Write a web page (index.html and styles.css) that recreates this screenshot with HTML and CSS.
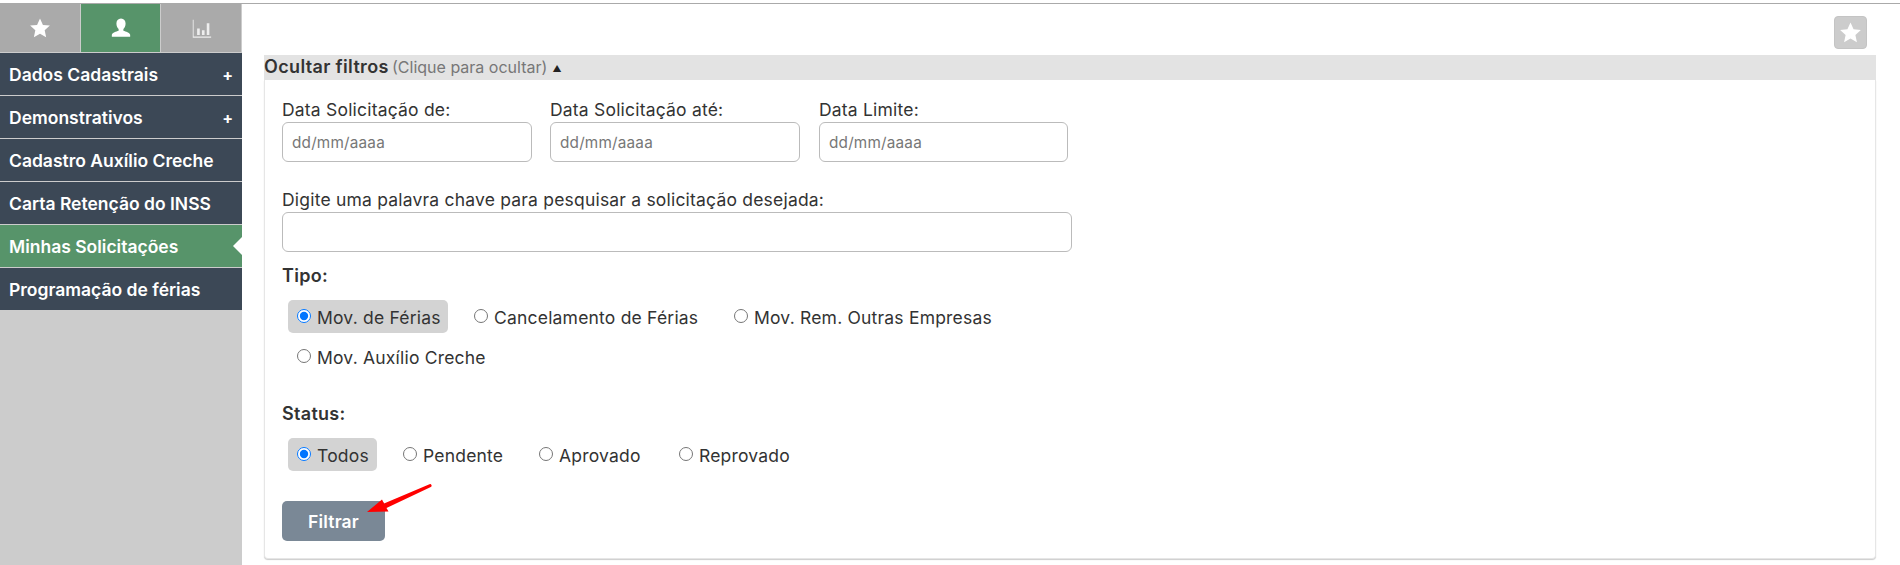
FILE: index.html
```html
<!DOCTYPE html>
<html lang="pt-BR">
<head>
<meta charset="utf-8">
<title>Minhas Solicitações</title>
<link rel="stylesheet" href="styles.css">
</head>
<body>
<div class="app">
  <aside class="sidebar">
    <div class="tabs">
      <div class="tab">
        <svg class="tab-icon" viewBox="0 0 24 24"><path class="fill-white" d="M12 1.500l3.200 7.100 7.600.8-5.700 5.100 1.600 7.600L12 18.200l-6.700 3.900 1.600-7.600-5.700-5.100 7.600-.8z"/></svg>
      </div>
      <div class="tab tab-active">
        <svg class="tab-icon" viewBox="0 0 24 24"><path class="fill-white" d="M12 1.500c3.200 0 5 2.300 5 5.600 0 2.500-1 4.900-2.400 6.100v1.900c2.700 1 6.800 2 7.400 4.200v2.200H2v-2.200c.6-2.200 4.700-3.200 7.400-4.200v-1.900C8 12 7 9.600 7 7.100c0-3.300 1.800-5.600 5-5.600z"/></svg>
      </div>
      <div class="tab">
        <svg class="tab-icon tab-icon-chart" viewBox="0 0 24 24"><path class="fill-white" d="M2 2h1v19h20v1.500H2zM7 12h3v7.500H7zM12.500 14h3v5.500h-3zM18 6h3v13.500h-3z"/></svg>
      </div>
    </div>
    <nav class="menu">
      <a class="menu-item">Dados Cadastrais<span class="plus">+</span></a>
      <a class="menu-item">Demonstrativos<span class="plus">+</span></a>
      <a class="menu-item">Cadastro Auxílio Creche</a>
      <a class="menu-item">Carta Retenção do INSS</a>
      <a class="menu-item menu-item-active">Minhas Solicitações</a>
      <a class="menu-item menu-item-last">Programação de férias</a>
    </nav>
  </aside>
  <main class="main">
    <div class="toolbar">
      <button class="fav" type="button" aria-label="Favoritar">
        <svg class="fav-icon" viewBox="0 0 24 24"><path class="fill-white" d="M12 1.500l3.200 7.100 7.600.8-5.700 5.100 1.600 7.600L12 18.200l-6.700 3.900 1.600-7.600-5.700-5.100 7.600-.8z"/></svg>
      </button>
    </div>
    <section class="panel">
      <header class="panel-head"><strong>Ocultar filtros</strong> <span class="hint">(Clique para ocultar)</span> <span class="caret">▲</span></header>
      <form class="card">
        <div class="dates">
          <label class="field field-a">Data Solicitação de:<input class="input" type="text" placeholder="dd/mm/aaaa"></label>
          <label class="field field-b">Data Solicitação até:<input class="input" type="text" placeholder="dd/mm/aaaa"></label>
          <label class="field field-c">Data Limite:<input class="input" type="text" placeholder="dd/mm/aaaa"></label>
        </div>
        <label class="field field-key">Digite uma palavra chave para pesquisar a solicitação desejada:<input class="input" type="text"></label>
        <h3 class="group-title title-tipo">Tipo:</h3>
        <div class="radios radios-tipo">
          <label class="radio radio-on r-ferias"><input type="radio" name="tipo" checked>Mov. de Férias</label>
          <label class="radio r-canc"><input type="radio" name="tipo">Cancelamento de Férias</label>
          <label class="radio r-rem"><input type="radio" name="tipo">Mov. Rem. Outras Empresas</label>
          <label class="radio r-aux"><input type="radio" name="tipo">Mov. Auxílio Creche</label>
        </div>
        <h3 class="group-title title-status">Status:</h3>
        <div class="radios">
          <label class="radio radio-on r-todos"><input type="radio" name="status" checked>Todos</label>
          <label class="radio r-pend"><input type="radio" name="status">Pendente</label>
          <label class="radio r-apr"><input type="radio" name="status">Aprovado</label>
          <label class="radio r-rep"><input type="radio" name="status">Reprovado</label>
        </div>
        <button class="submit" type="button">Filtrar</button>
      </form>
    </section>
    <svg class="arrow" viewBox="0 0 70 34"><path class="arrow-shape" d="M1 29L16 16.500 18 20.500 63.500 1.200a1.500 1.500 0 0 1 1.300 2.700L20.500 25l2 3.500z"/></svg>
  </main>
</div>
</body>
</html>
```
FILE: styles.css
```css
* { box-sizing: border-box; }
html, body { margin: 0; height: 100%; }
body {
  font-family: "Inter", "Noto Sans", sans-serif;
  font-size: 17.500px;
  letter-spacing: 0.2px;
  color: #333;
  background: #fff;
  overflow: hidden;
}
.app { display: flex; height: 565px; padding-top: 3px; position: relative; }
.app::before {
  content: "";
  position: absolute;
  left: 0; right: 0; top: 3px;
  height: 1px;
  background: #aaa;
}
.fill-white { fill: #fff; }
.sidebar { width: 242px; flex: none; background: #ccc; padding-top: 1px; }
.tabs { display: flex; height: 48px; width: 241px; gap: 1px; }
.tab { flex: 1; display: flex; align-items: center; justify-content: center; background: #aaa; }
.tab-active { background: #57946a; }
.tab-icon { width: 22px; height: 22px; }
.tab-icon-chart { width: 21px; height: 21px; opacity: 0.8; }
.menu { display: flex; flex-direction: column; padding-top: 1px; }
.menu-item {
  height: 43px;
  padding: 1px 9px 0;
  display: flex;
  align-items: center;
  justify-content: space-between;
  background: #3c4856;
  border-bottom: 1px solid #ccc;
  color: #fff;
  font-size: 17.500px;
  font-weight: 600;
  letter-spacing: 0;
  position: relative;
}
.menu-item-active { background: #57946a; }
.menu-item-active::after {
  content: "";
  position: absolute;
  right: 0; top: 12px;
  border: 9px solid transparent;
  border-left: 0;
  border-right-color: #fff;
}
.menu-item-last { border-bottom: 0; height: 42px; }
.plus { font-size: 16px; font-weight: 700; }
.main { flex: 1; min-width: 0; padding: 13px 24px 0 22px; position: relative; }
.toolbar { display: flex; justify-content: flex-end; padding-right: 9px; height: 39px; }
.fav {
  width: 33px; height: 33px; padding: 0;
  display: flex; align-items: center; justify-content: center;
  background: #ccc; border: 1px solid #c4c4c4; border-radius: 4px;
}
.fav-icon { width: 23px; height: 23px; }
.panel-head { height: 25px; background: #e3e3e3; line-height: 24px; font-size: 18px; }
.panel-head strong { font-weight: 600; letter-spacing: 0.35px; }
.hint { font-size: 16px; color: #777; letter-spacing: 0; margin-left: -2px; }
.caret { font-size: 9px; color: #222; vertical-align: 1px; }
.card {
  height: 479px;
  padding: 17px 17px 0;
  background: #fff;
  border: 1px solid #e6e6e6;
  border-top: 0;
  border-radius: 0 0 4px 4px;
  box-shadow: 0 1px 1px #ccc;
}
.dates { display: flex; gap: 18px; }
.field { display: flex; flex-direction: column; line-height: 25px; }
.field-a { width: 250px; }
.field-b { width: 250px; }
.field-c { width: 249px; margin-left: 1px; }
.field-key { width: 790px; margin-top: 25px; }
.input {
  height: 40px;
  width: 100%;
  padding: 0 9px;
  border: 1px solid #bbb;
  border-radius: 6px;
  font: 15.300px "Inter", sans-serif;
  letter-spacing: 0.2px;
  background: #fff;
}
.input::placeholder { color: #777; opacity: 1; }
.group-title { margin: 0; font-size: 18px; font-weight: 600; letter-spacing: 0.3px; line-height: 24px; }
.title-tipo { margin-top: 12px; }
.title-status { margin-top: 29px; }
.radios { display: flex; flex-wrap: wrap; gap: 7px 17px; margin: 12px 0 0 6px; }
.radio {
  height: 33px;
  padding: 1px 9px 0;
  display: flex;
  align-items: center;
  gap: 4px;
  border-radius: 5px;
  white-space: nowrap;
}
.radio input { width: 14px; height: 14px; margin: 0 2px 3px 0; flex: none; }
.radio-on { background: #d3d3d3; }
.r-ferias { width: 160px; }
.r-canc { width: 243px; }
.r-rem { width: 270px; }
.r-aux { width: 210px; }
.r-todos { width: 89px; }
.r-pend { width: 119px; }
.r-apr { width: 123px; }
.r-rep { width: 125px; }
.radios-tipo { width: 800px; }
.submit {
  display: block;
  width: 103px;
  height: 40px;
  margin-top: 30px;
  background: #7a8896;
  border: 0;
  border-radius: 5px;
  color: #fff;
  font: 600 17.500px "Inter", sans-serif;
  letter-spacing: 0.2px;
}
.arrow { position: absolute; left: 124px; top: 480px; width: 70px; height: 34px; }
.arrow-shape { fill: #f00; }
```
